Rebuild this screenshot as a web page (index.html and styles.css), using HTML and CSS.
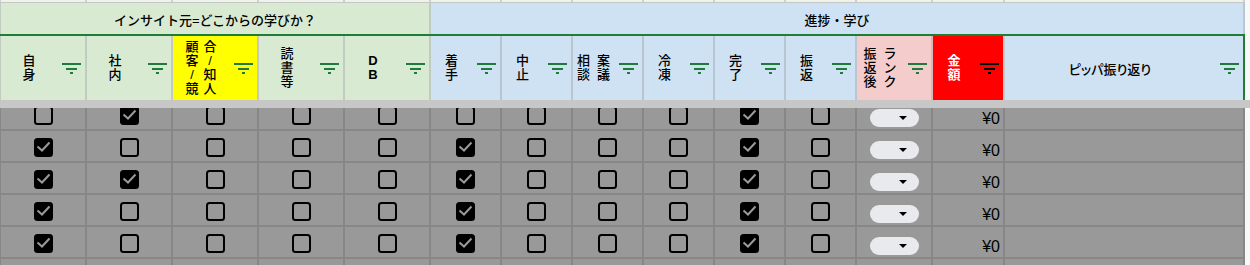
FILE: index.html
```html
<!DOCTYPE html>
<html lang="ja">

<head>
    <meta charset="UTF-8">
    <title>学びシート</title>
    <link rel="stylesheet" href="styles.css">
</head>

<body>
    <svg class="defs" xmlns="http://www.w3.org/2000/svg">
        <symbol id="filter" viewBox="0 0 19 11">
            <rect x="0" y="0" width="19" height="2" fill="currentColor" />
            <rect x="4" y="5" width="11" height="2" fill="currentColor" />
            <rect x="8" y="9" width="3" height="2" fill="currentColor" />
        </symbol>
        <symbol id="cb-off" viewBox="0 0 19 19">
            <rect x="1" y="1" width="17" height="17" rx="2.5" fill="none" stroke="#000" stroke-width="2" />
        </symbol>
        <symbol id="cb-on" viewBox="0 0 19 19">
            <rect x="0" y="0" width="19" height="19" rx="3.5" fill="#000" />
            <polyline points="3.5,8.5 8,12.5 15.5,4.5" fill="none" stroke="#9a9a9a" stroke-width="2" />
        </symbol>
        <symbol id="caret" viewBox="0 0 8 4">
            <polygon points="0,0 8,0 4,4" fill="#000" />
        </symbol>
    </svg>

    <div class="grid top-row">
        <div></div><div></div><div></div><div></div><div></div><div></div><div></div>
        <div></div><div></div><div></div><div></div><div></div><div></div><div></div>
    </div>

    <div class="grid group-row">
        <div class="group group-green">インサイト元=どこからの学びか？</div>
        <div class="group group-blue">進捗・学び</div>
    </div>

    <div class="grid head-row">
        <div class="head green"><div class="label"><span class="col">自身</span></div><svg class="filter"><use href="#filter" /></svg></div>
        <div class="head green"><div class="label"><span class="col">社内</span></div><svg class="filter"><use href="#filter" /></svg></div>
        <div class="head yellow"><div class="label stack tight"><span class="col">顧客/競</span><span class="col">合/知人</span></div><svg class="filter"><use href="#filter" /></svg></div>
        <div class="head green"><div class="label"><span class="col">読書等</span></div><svg class="filter"><use href="#filter" /></svg></div>
        <div class="head green"><div class="label"><span class="col latin">DB</span></div><svg class="filter"><use href="#filter" /></svg></div>
        <div class="head blue"><div class="label"><span class="col">着手</span></div><svg class="filter"><use href="#filter" /></svg></div>
        <div class="head blue"><div class="label"><span class="col">中止</span></div><svg class="filter"><use href="#filter" /></svg></div>
        <div class="head blue"><div class="label stack"><span class="col">相談</span><span class="col">案議</span></div><svg class="filter"><use href="#filter" /></svg></div>
        <div class="head blue"><div class="label"><span class="col">冷凍</span></div><svg class="filter"><use href="#filter" /></svg></div>
        <div class="head blue"><div class="label"><span class="col">完了</span></div><svg class="filter"><use href="#filter" /></svg></div>
        <div class="head blue"><div class="label"><span class="col">振返</span></div><svg class="filter"><use href="#filter" /></svg></div>
        <div class="head pink"><div class="label stack"><span class="col">振返後</span><span class="col">ランク</span></div><svg class="filter"><use href="#filter" /></svg></div>
        <div class="head red"><div class="label"><span class="col">金額</span></div><svg class="filter"><use href="#filter" /></svg></div>
        <div class="head blue last"><div class="label"><span class="wide">ピッパ振り返り</span></div><svg class="filter"><use href="#filter" /></svg></div>
    </div>

    <div class="freeze"></div>

    <div class="body">
        <div class="rows">
            <div class="grid data-row">
                <div class="cell"><svg class="cb"><use href="#cb-off" /></svg></div>
                <div class="cell"><svg class="cb"><use href="#cb-on" /></svg></div>
                <div class="cell"><svg class="cb"><use href="#cb-off" /></svg></div>
                <div class="cell"><svg class="cb"><use href="#cb-off" /></svg></div>
                <div class="cell"><svg class="cb"><use href="#cb-off" /></svg></div>
                <div class="cell"><svg class="cb"><use href="#cb-off" /></svg></div>
                <div class="cell"><svg class="cb"><use href="#cb-off" /></svg></div>
                <div class="cell"><svg class="cb"><use href="#cb-off" /></svg></div>
                <div class="cell"><svg class="cb"><use href="#cb-off" /></svg></div>
                <div class="cell"><svg class="cb"><use href="#cb-on" /></svg></div>
                <div class="cell"><svg class="cb"><use href="#cb-off" /></svg></div>
                <div class="cell pick"><span class="chip"><svg class="caret"><use href="#caret" /></svg></span></div>
                <div class="cell money">¥0</div>
                <div class="cell"></div>
            </div>
            <div class="grid data-row">
                <div class="cell"><svg class="cb"><use href="#cb-on" /></svg></div>
                <div class="cell"><svg class="cb"><use href="#cb-off" /></svg></div>
                <div class="cell"><svg class="cb"><use href="#cb-off" /></svg></div>
                <div class="cell"><svg class="cb"><use href="#cb-off" /></svg></div>
                <div class="cell"><svg class="cb"><use href="#cb-off" /></svg></div>
                <div class="cell"><svg class="cb"><use href="#cb-on" /></svg></div>
                <div class="cell"><svg class="cb"><use href="#cb-off" /></svg></div>
                <div class="cell"><svg class="cb"><use href="#cb-off" /></svg></div>
                <div class="cell"><svg class="cb"><use href="#cb-off" /></svg></div>
                <div class="cell"><svg class="cb"><use href="#cb-on" /></svg></div>
                <div class="cell"><svg class="cb"><use href="#cb-off" /></svg></div>
                <div class="cell pick"><span class="chip"><svg class="caret"><use href="#caret" /></svg></span></div>
                <div class="cell money">¥0</div>
                <div class="cell"></div>
            </div>
            <div class="grid data-row">
                <div class="cell"><svg class="cb"><use href="#cb-on" /></svg></div>
                <div class="cell"><svg class="cb"><use href="#cb-on" /></svg></div>
                <div class="cell"><svg class="cb"><use href="#cb-off" /></svg></div>
                <div class="cell"><svg class="cb"><use href="#cb-off" /></svg></div>
                <div class="cell"><svg class="cb"><use href="#cb-off" /></svg></div>
                <div class="cell"><svg class="cb"><use href="#cb-on" /></svg></div>
                <div class="cell"><svg class="cb"><use href="#cb-off" /></svg></div>
                <div class="cell"><svg class="cb"><use href="#cb-off" /></svg></div>
                <div class="cell"><svg class="cb"><use href="#cb-off" /></svg></div>
                <div class="cell"><svg class="cb"><use href="#cb-on" /></svg></div>
                <div class="cell"><svg class="cb"><use href="#cb-off" /></svg></div>
                <div class="cell pick"><span class="chip"><svg class="caret"><use href="#caret" /></svg></span></div>
                <div class="cell money">¥0</div>
                <div class="cell"></div>
            </div>
            <div class="grid data-row">
                <div class="cell"><svg class="cb"><use href="#cb-on" /></svg></div>
                <div class="cell"><svg class="cb"><use href="#cb-off" /></svg></div>
                <div class="cell"><svg class="cb"><use href="#cb-off" /></svg></div>
                <div class="cell"><svg class="cb"><use href="#cb-off" /></svg></div>
                <div class="cell"><svg class="cb"><use href="#cb-off" /></svg></div>
                <div class="cell"><svg class="cb"><use href="#cb-on" /></svg></div>
                <div class="cell"><svg class="cb"><use href="#cb-off" /></svg></div>
                <div class="cell"><svg class="cb"><use href="#cb-off" /></svg></div>
                <div class="cell"><svg class="cb"><use href="#cb-off" /></svg></div>
                <div class="cell"><svg class="cb"><use href="#cb-on" /></svg></div>
                <div class="cell"><svg class="cb"><use href="#cb-off" /></svg></div>
                <div class="cell pick"><span class="chip"><svg class="caret"><use href="#caret" /></svg></span></div>
                <div class="cell money">¥0</div>
                <div class="cell"></div>
            </div>
            <div class="grid data-row">
                <div class="cell"><svg class="cb"><use href="#cb-on" /></svg></div>
                <div class="cell"><svg class="cb"><use href="#cb-off" /></svg></div>
                <div class="cell"><svg class="cb"><use href="#cb-off" /></svg></div>
                <div class="cell"><svg class="cb"><use href="#cb-off" /></svg></div>
                <div class="cell"><svg class="cb"><use href="#cb-off" /></svg></div>
                <div class="cell"><svg class="cb"><use href="#cb-on" /></svg></div>
                <div class="cell"><svg class="cb"><use href="#cb-off" /></svg></div>
                <div class="cell"><svg class="cb"><use href="#cb-off" /></svg></div>
                <div class="cell"><svg class="cb"><use href="#cb-off" /></svg></div>
                <div class="cell"><svg class="cb"><use href="#cb-on" /></svg></div>
                <div class="cell"><svg class="cb"><use href="#cb-off" /></svg></div>
                <div class="cell pick"><span class="chip"><svg class="caret"><use href="#caret" /></svg></span></div>
                <div class="cell money">¥0</div>
                <div class="cell"></div>
            </div>
            <div class="grid data-row">
                <div class="cell"></div><div class="cell"></div><div class="cell"></div><div class="cell"></div>
                <div class="cell"></div><div class="cell"></div><div class="cell"></div><div class="cell"></div>
                <div class="cell"></div><div class="cell"></div><div class="cell"></div><div class="cell"></div>
                <div class="cell"></div><div class="cell"></div>
            </div>
        </div>
    </div>
</body>

</html>
```

FILE: styles.css
```css
* {
    margin: 0;
    padding: 0;
    box-sizing: border-box;
}

body {
    width: 1250px;
    height: 265px;
    overflow: hidden;
    background: #f8f9fa;
    font-family: "Liberation Sans", "Noto Sans CJK JP", sans-serif;
    font-size: 13px;
    color: #000;
}

.defs {
    display: none;
}

.grid {
    display: grid;
    grid-template-columns: 87px repeat(4, 86px) repeat(6, 71px) 76px 72px 240px;
    width: 1245px;
}

/* sliver of the row above */
.top-row {
    height: 3px;
    background: #eef4eb;
    border-bottom: 1px solid #c4c7c4;
}

.top-row div {
    border-right: 2px solid #cdd2cb;
}

.top-row div:first-child {
    border-left: 1px solid #cdd2cb;
}

.group-row {
    height: 31px;
}

.group {
    display: flex;
    align-items: flex-end;
    justify-content: center;
    padding-bottom: 5px;
    line-height: 17px;
    font-weight: 500;
    border-right: 2px solid #c2cbc0;
}

.group-green {
    grid-column: 1 / 6;
    background: #d9ead3;
    border-left: 1px solid #c2cbc0;
}

.group-blue {
    grid-column: 6 / 15;
    background: #cfe2f3;
    border-right-color: #b8c6d2;
}

.head-row {
    height: 66px;
    border-top: 2px solid #1e7e34;
}

.head {
    display: flex;
    align-items: center;
    font-weight: 500;
    border-right: 2px solid #c2cbc0;
}

.head:first-child {
    border-left: 1px solid #c2cbc0;
}

.head.green {
    background: #d9ead3;
}

.head.yellow {
    background: #ffff00;
}

.head.blue {
    background: #cfe2f3;
    border-right-color: #b8c6d2;
}

.head.pink {
    background: #f4cccc;
    border-right-color: #d9b8b8;
}

.head.red {
    background: #ff0000;
    color: #fff;
    font-weight: bold;
    border-right-color: #c8c8c8;
}

.head.last {
    border-right-color: #1e7e34;
}

.label {
    flex: 1;
    display: flex;
    justify-content: center;
    align-items: center;
}

.stack {
    gap: 6px;
}

.stack.tight {
    gap: 4px;
}

.col {
    width: 14px;
    line-height: 14px;
    text-align: center;
    line-break: anywhere;
    word-break: break-all;
}

.col.latin {
    font-weight: bold;
}

.wide {
    font-feature-settings: "palt";
}

.filter {
    flex: none;
    width: 19px;
    height: 11px;
    margin: 0 4px 0 5px;
    color: #217a3c;
}

.head.red .filter {
    color: #000;
}

.freeze {
    height: 8px;
    background: #c7c7c7;
}

.body {
    height: 157px;
    overflow: hidden;
}

.rows {
    margin-top: -9px;
}

.data-row {
    height: 32px;
    background: #999999;
    border-bottom: 2px solid #878787;
}

.cell {
    display: flex;
    justify-content: center;
    align-items: center;
    padding-top: 2px;
    border-right: 2px solid #878787;
}

.cell:first-child {
    border-left: 1px solid #878787;
}

.cb {
    width: 19px;
    height: 19px;
}

.cell.pick {
    justify-content: flex-start;
    align-items: flex-end;
    padding: 0 0 2px 13px;
}

.chip {
    display: flex;
    align-items: center;
    justify-content: flex-end;
    width: 49px;
    height: 18px;
    padding-right: 12px;
    border-radius: 9px;
    background: #e9eaee;
}

.caret {
    width: 8px;
    height: 4px;
}

.cell.money {
    justify-content: flex-end;
    align-items: flex-end;
    padding: 0 3px 2px 0;
    font-size: 16px;
    line-height: 16px;
}
```
